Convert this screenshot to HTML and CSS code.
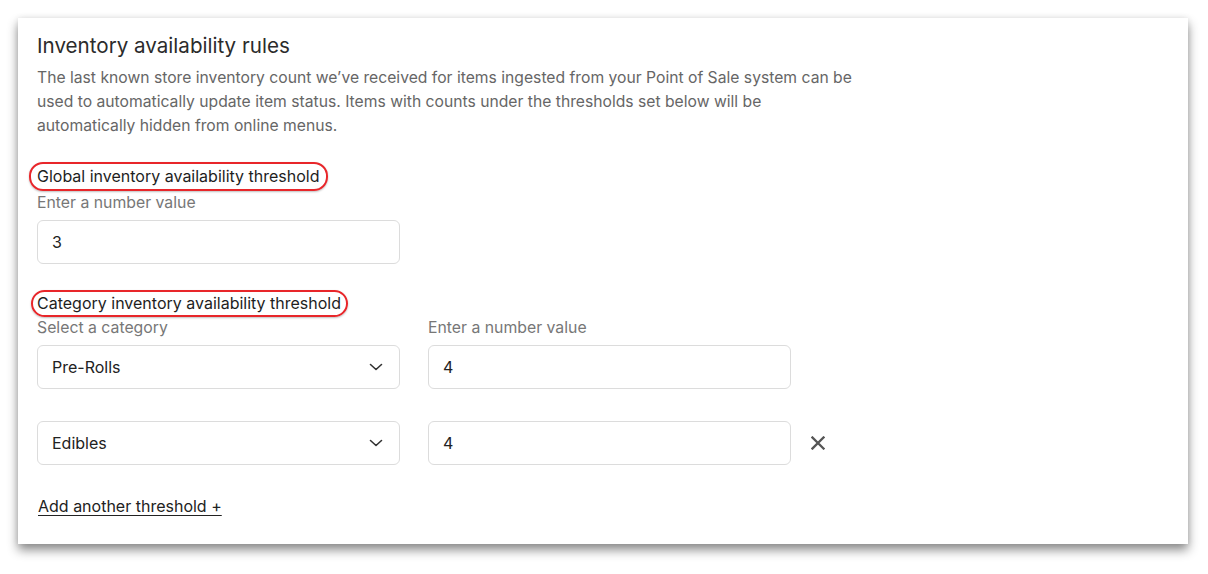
FILE: index.html
```html
<!DOCTYPE html>
<html>
<head>
<meta charset="utf-8">
<link rel="stylesheet" href="styles.css">
</head>
<body>
<div class="card">
  <h2 class="title">Inventory availability rules</h2>
  <p class="desc">The last known store inventory count we’ve received for items ingested from your Point of Sale system can be used to automatically update item status. Items with counts under the thresholds set below will be automatically hidden from online menus.</p>

  <div class="section global">
    <div class="label-wrap"><span class="label ring-a">Global inventory availability threshold</span></div>
    <div class="sub">Enter a number value</div>
    <div class="field w363"><span class="val">3</span></div>
  </div>

  <div class="section category">
    <div class="label-wrap"><span class="label ring-b">Category inventory availability threshold</span></div>
    <div class="row heads">
      <div class="sub col">Select a category</div>
      <div class="sub col">Enter a number value</div>
    </div>
    <div class="row">
      <div class="field w363 select"><span class="val">Pre-Rolls</span>
        <svg class="chev" width="14" height="8" viewBox="0 0 14 8"><path d="M1.5 1.5 L7 6.5 L12.5 1.5" fill="none" stroke="#333" stroke-width="1.6" stroke-linecap="round" stroke-linejoin="round"/></svg>
      </div>
      <div class="field w363"><span class="val">4</span></div>
    </div>
    <div class="row second">
      <div class="field w363 select"><span class="val">Edibles</span>
        <svg class="chev" width="14" height="8" viewBox="0 0 14 8"><path d="M1.5 1.5 L7 6.5 L12.5 1.5" fill="none" stroke="#333" stroke-width="1.6" stroke-linecap="round" stroke-linejoin="round"/></svg>
      </div>
      <div class="field w363"><span class="val">4</span></div>
      <svg class="close" width="14" height="14" viewBox="0 0 14 14"><path d="M1.5 1.5 L12.5 12.5 M12.5 1.5 L1.5 12.5" stroke="#555" stroke-width="2.3" stroke-linecap="square"/></svg>
    </div>
  </div>

  <a class="add" href="#">Add another threshold +</a>
</div>
</body>
</html>
```
FILE: styles.css
```css
* { box-sizing: border-box; }
html, body { margin: 0; background: #fff; }
body {
  padding: 18px 20px 30px 18px;
  font-family: "Inter", "Noto Sans", sans-serif;
}
.card {
  width: 1170px;
  height: 526px;
  background: #fff;
  box-shadow: 0 6px 10px rgba(0,0,0,0.45), 0 0 6px rgba(0,0,0,0.08);
  padding: 14px 19px 0 19px;
}
.title {
  margin: 0;
  font-size: 20.6px;
  font-weight: 400;
  line-height: 28px;
  color: #2b2b2b;
}
.desc {
  margin: 6px 0 0 0;
  width: 822px;
  font-size: 15.7px;
  line-height: 24px;
  color: #666;
}
.section { display: flex; flex-direction: column; }
.global { margin-top: 24px; }
.category { margin-top: 26px; }
.label-wrap { display: flex; }
.label {
  display: inline-block;
  font-size: 16px;
  line-height: 23px;
  font-weight: 400;
  color: #1e1e1e;
  border: 2px solid #e8262a;
  border-radius: 14px;
  box-shadow: 0 1px 2px rgba(0,0,0,0.25);
}
.ring-a { margin-left: -8px; padding: 1px 6px 1px 6px; }
.ring-b { margin-left: -6px; padding: 0 5px 0 4px; }
.sub {
  font-size: 15.8px;
  line-height: 22px;
  color: #777;
  margin-top: 2px;
}
.global .sub { margin-top: 1px; }
.field {
  height: 44px;
  border: 1px solid #dcdcdc;
  border-radius: 6px;
  display: flex;
  align-items: center;
  padding: 0 14px;
  font-size: 16px;
  color: #222;
  margin-top: 6px;
}
.w363 { width: 363px; }
.select { justify-content: space-between; padding-right: 16px; }
.row { display: flex; gap: 28px; align-items: center; }
.row .field { margin-top: 6px; }
.heads { gap: 28px; }
.heads .col { width: 363px; margin-top: 0; }
.second { margin-top: 32px; }
.second .field { margin-top: 0; }
.close { margin-left: -8px; }
.add {
  display: inline-block;
  margin-top: 31px;
  margin-left: 1px;
  font-size: 16px;
  font-weight: 400;
  color: #222;
  text-decoration: underline;
  text-underline-offset: 3px;
}
```
